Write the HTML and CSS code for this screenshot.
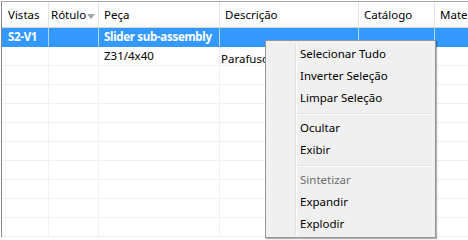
FILE: index.html
```html
<!DOCTYPE html>
<html lang="pt">
<head>
    <meta charset="UTF-8">
    <title>Lista de peças</title>
    <link rel="stylesheet" href="styles.css">
</head>
<body>
    <div class="list">
        <div class="row head">
            <div class="cell c1">Vistas</div>
            <div class="cell c2">Rótulo<span class="sort"></span></div>
            <div class="cell c3">Peça</div>
            <div class="cell c4">Descrição</div>
            <div class="cell c5">Catálogo</div>
            <div class="cell c6">Mate</div>
        </div>
        <div class="row selected">
            <div class="cell c1">S2-V1</div>
            <div class="cell c2"></div>
            <div class="cell c3">Slider sub-assembly</div>
            <div class="cell c4"></div>
            <div class="cell c5"></div>
            <div class="cell c6"></div>
        </div>
        <div class="row">
            <div class="cell c1"></div>
            <div class="cell c2"></div>
            <div class="cell c3">Z31/4x40</div>
            <div class="cell c4 desc">Parafuso</div>
            <div class="cell c5"></div>
            <div class="cell c6"></div>
        </div>
        <!-- linhas vazias -->
        <div class="row"><div class="cell c1"></div><div class="cell c2"></div><div class="cell c3"></div><div class="cell c4"></div><div class="cell c5"></div><div class="cell c6"></div></div>
        <div class="row"><div class="cell c1"></div><div class="cell c2"></div><div class="cell c3"></div><div class="cell c4"></div><div class="cell c5"></div><div class="cell c6"></div></div>
        <div class="row"><div class="cell c1"></div><div class="cell c2"></div><div class="cell c3"></div><div class="cell c4"></div><div class="cell c5"></div><div class="cell c6"></div></div>
        <div class="row"><div class="cell c1"></div><div class="cell c2"></div><div class="cell c3"></div><div class="cell c4"></div><div class="cell c5"></div><div class="cell c6"></div></div>
        <div class="row"><div class="cell c1"></div><div class="cell c2"></div><div class="cell c3"></div><div class="cell c4"></div><div class="cell c5"></div><div class="cell c6"></div></div>
        <div class="row"><div class="cell c1"></div><div class="cell c2"></div><div class="cell c3"></div><div class="cell c4"></div><div class="cell c5"></div><div class="cell c6"></div></div>
        <div class="row"><div class="cell c1"></div><div class="cell c2"></div><div class="cell c3"></div><div class="cell c4"></div><div class="cell c5"></div><div class="cell c6"></div></div>
        <div class="row"><div class="cell c1"></div><div class="cell c2"></div><div class="cell c3"></div><div class="cell c4"></div><div class="cell c5"></div><div class="cell c6"></div></div>
        <div class="row"><div class="cell c1"></div><div class="cell c2"></div><div class="cell c3"></div><div class="cell c4"></div><div class="cell c5"></div><div class="cell c6"></div></div>
    </div>

    <div class="menu">
        <div class="menu-body">
            <div class="item">Selecionar Tudo</div>
            <div class="item">Inverter Seleção</div>
            <div class="item">Limpar Seleção</div>
            <div class="sep"></div>
            <div class="item">Ocultar</div>
            <div class="item">Exibir</div>
            <div class="sep"></div>
            <div class="item disabled">Sintetizar</div>
            <div class="item">Expandir</div>
            <div class="item">Explodir</div>
        </div>
    </div>
</body>
</html>
```

FILE: styles.css
```css
body {
    margin: 0;
    padding: 1px 0 0 1px;
    background-color: #fff;
    font-family: "Noto Sans", "Open Sans", sans-serif;
    font-size: 11.5px;
    color: #000;
    overflow: hidden;
    height: 240px;
    box-sizing: border-box;
}
.list {
    border-top: 1px solid #a9a9a9;
    border-left: 1px solid #828790;
    overflow: hidden;
}
.row {
    display: flex;
    height: 19px;
}
.cell {
    box-sizing: border-box;
    flex: none;
    border-right: 1px solid #f0f0f0;
    border-bottom: 1px solid #f0f0f0;
    padding-left: 5px;
    line-height: 18px;
    white-space: nowrap;
    overflow: hidden;
}
.c1 { width: 47px; padding-left: 6px; }
.c2 { width: 50px; }
.c3 { width: 121px; }
.c4 { width: 139px; }
.c5 { width: 76px; }
.c6 { flex: 1; border-right: none; }

/* cabeçalho */
.head {
    height: 26px;
    background: linear-gradient(#fff 60%, #f8f9fa);
}
.head .cell {
    line-height: 25px;
    border-right-color: #e5e5e5;
    border-bottom-color: #d5d5d5;
}
.head .c2 {
    padding-left: 2px;
    position: relative;
}
.sort {
    position: absolute;
    left: 38px;
    top: 12px;
    width: 0;
    height: 0;
    border-left: 4px solid transparent;
    border-right: 4px solid transparent;
    border-top: 5px solid #a5a5a5;
}

/* linha selecionada */
.selected .cell {
    background-color: #3399ff;
    color: #fff;
    font-weight: bold;
    letter-spacing: -0.3px;
    border-right-color: #b5d7ff;
    border-bottom-color: #3399ff;
}
.desc {
    padding-left: 1px;
    padding-top: 3px;
}

/* menu de contexto */
.menu {
    position: absolute;
    left: 265px;
    top: 40px;
    width: 171px;
    box-sizing: border-box;
    border: 1px solid #979797;
    background-color: #f0f0f0;
    padding: 2px;
    box-shadow: 1px 1px 1px rgba(0, 0, 0, 0.3);
}
.menu-body {
    background: linear-gradient(to right, #f0f0f0 27px, #e2e3e3 27px, #e2e3e3 28px, #fff 28px, #fff 29px, #f0f0f0 29px);
}
.item {
    height: 22px;
    line-height: 22px;
    padding-left: 32px;
    white-space: nowrap;
}
.item.disabled {
    color: #6d6d6d;
}
.sep {
    margin: 4px 1px 2px 28px;
    border-top: 1px solid #e2e3e3;
    border-bottom: 1px solid #fff;
}
```
